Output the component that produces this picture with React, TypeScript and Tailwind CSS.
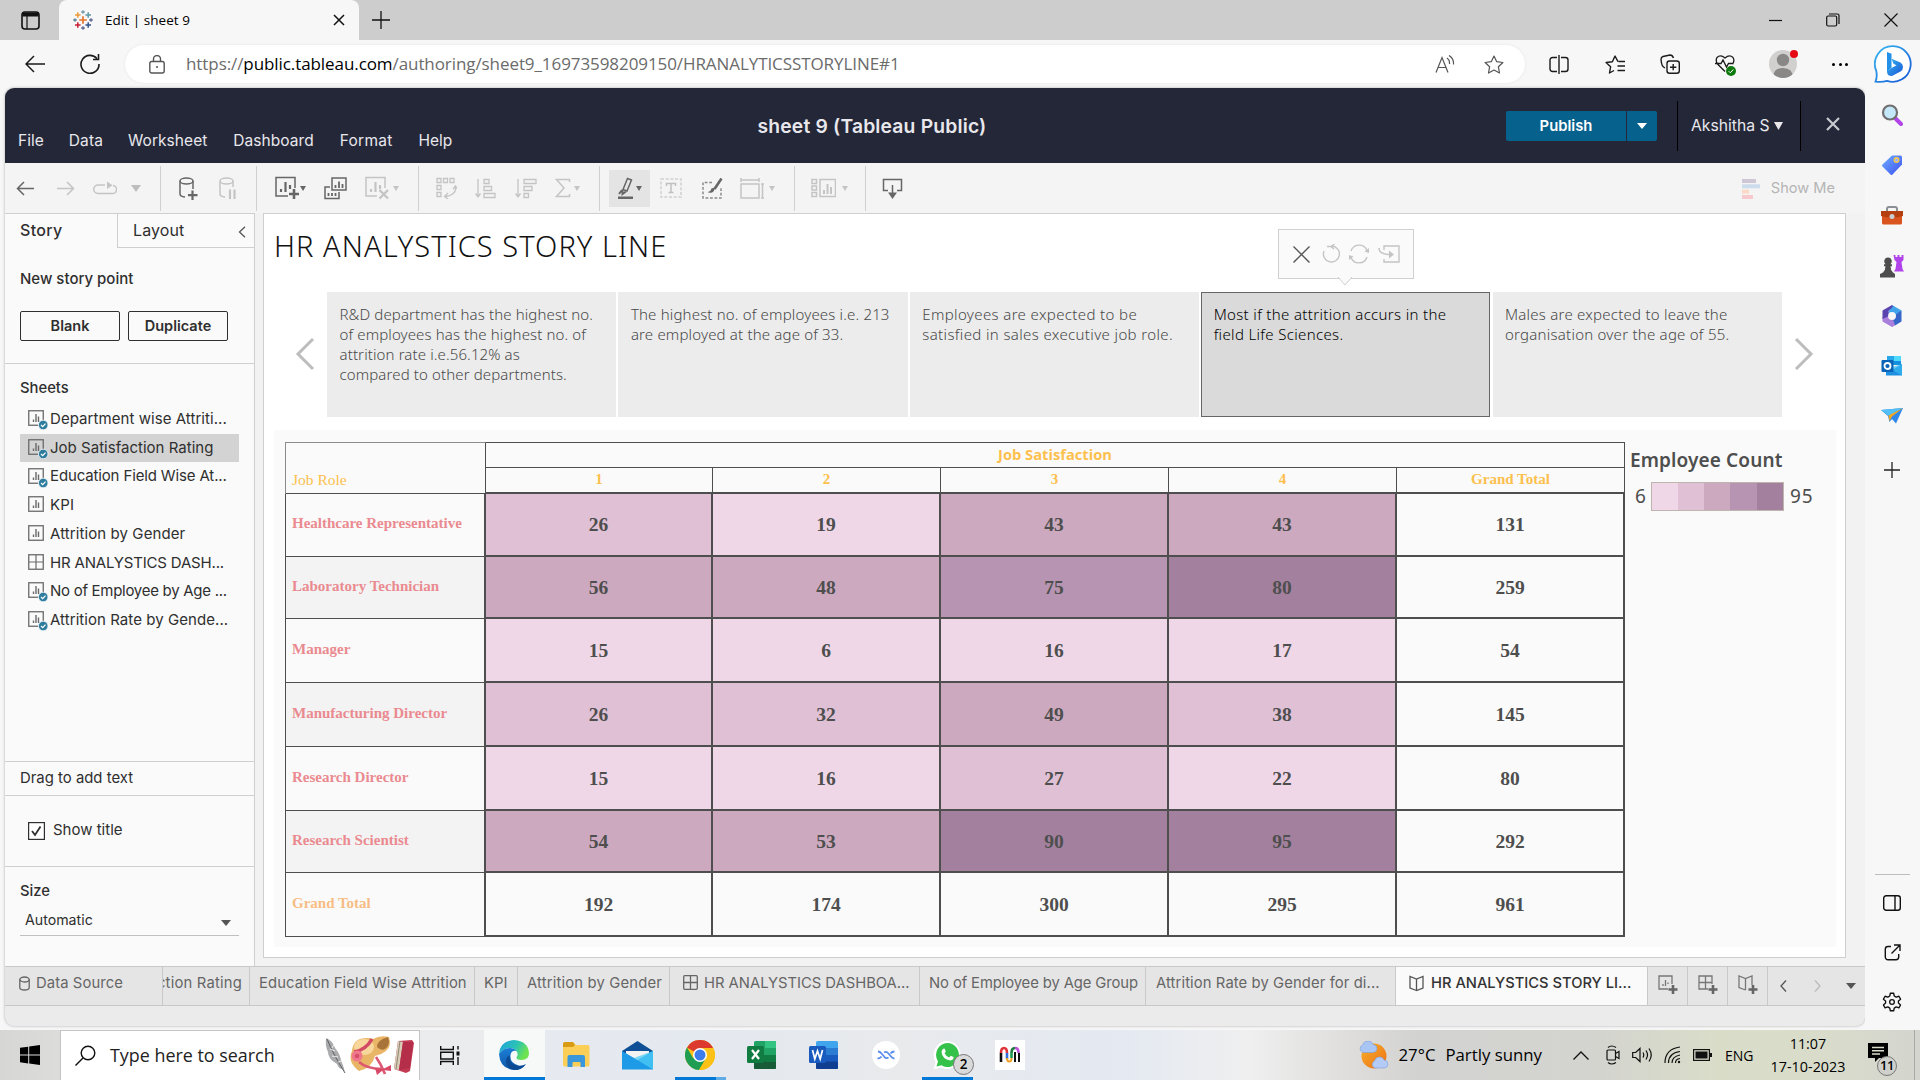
import React from 'react';

type SvgProps = { w: number; h: number; vb?: string; c?: string; s?: number; className?: string; children: React.ReactNode };

/* Stroked icon */
function Ic({ w, h, vb, c = '#666', s = 1.5, className = '', children }: SvgProps) {
  return (
    <svg width={w} height={h} viewBox={vb ?? `0 0 ${w} ${h}`} fill="none" stroke={c} strokeWidth={s} className={`shrink-0 ${className}`}>
      {children}
    </svg>
  );
}

function Caret({ c = '#666', w = 6, h = 5, className = '' }: { c?: string; w?: number; h?: number; className?: string }) {
  return (
    <svg width={w} height={h} viewBox="0 0 10 10" preserveAspectRatio="none" className={`shrink-0 ${className}`}>
      <path d="M0 0H10L5 10Z" fill={c} />
    </svg>
  );
}

/* ---------- Browser chrome ---------- */

function TableauMark() {
  const plus = (x: number, y: number, r: number, c: string, w: number) => (
    <path key={`${x}-${y}`} d={`M${x - r} ${y}H${x + r}M${x} ${y - r}V${y + r}`} stroke={c} strokeWidth={w} />
  );
  return (
    <svg width="20" height="20" viewBox="0 0 20 20" className="shrink-0">
      {plus(10, 10, 3.8, '#e8762d', 1.7)}
      {plus(4.8, 5, 2.8, '#eb9c3a', 1.5)}
      {plus(15.2, 5, 2.8, '#5c9aa8', 1.5)}
      {plus(4.8, 15, 2.8, '#c72037', 1.5)}
      {plus(15.2, 15, 2.8, '#35568f', 1.5)}
      {plus(10, 2, 1.8, '#7199a6', 1.3)}
      {plus(10, 18, 1.8, '#5b6591', 1.3)}
      {plus(2, 10, 1.8, '#5b879b', 1.3)}
      {plus(18, 10, 1.8, '#5b6591', 1.3)}
    </svg>
  );
}

function TabStrip() {
  return (
    <div className="flex h-10 items-stretch bg-[#cdcdcd]">
      <div className="flex w-[59px] items-center pl-[21px]">
        <Ic w={19} h={19} c="#111" s={1.6}>
          <rect x="1" y="1" width="17" height="17" rx="3" />
          <path d="M1.5 3.5h16" strokeWidth="4" />
          <path d="M6 5v13" strokeWidth="1.2" />
        </Ic>
      </div>
      <div className="flex w-[300px] items-center rounded-t-[8px] bg-[#f7f7f7] pl-[14px]">
        <TableauMark />
        <span className="ml-3 text-[13.500px] tracking-[0.050px] text-black">Edit | sheet 9</span>
        <Ic w={12} h={12} c="#111" s={1.5} className="ml-auto mr-[14px]">
          <path d="M1 1l10 10M11 1L1 11" />
        </Ic>
      </div>
      <div className="flex flex-1 items-center pl-[13px]">
        <Ic w={18} h={18} c="#111" s={1.3}>
          <path d="M9 0v18M0 9h18" />
        </Ic>
        <div className="ml-auto flex items-center pr-[22px]">
          <Ic w={14} h={14} c="#111" s={1.2} className="mr-[43px]">
            <path d="M0 7.500h13" />
          </Ic>
          <Ic w={14} h={14} c="#111" s={1.2} className="mr-[44px]">
            <rect x="0.7" y="3" width="10" height="10" rx="1.5" />
            <path d="M3 1h8.5Q13 1 13 2.5V11" />
          </Ic>
          <Ic w={14} h={14} c="#111" s={1.2}>
            <path d="M0.5 0.5l13 13M13.5 0.5l-13 13" />
          </Ic>
        </div>
      </div>
    </div>
  );
}

function AddressRow() {
  return (
    <div className="flex h-12 items-center">
      <Ic w={20} h={18} c="#1b1b1b" s={1.5} className="ml-[25px]">
        <path d="M20 9H1M9 1L1 9l8 8" />
      </Ic>
      <Ic w={20} h={20} c="#1b1b1b" s={1.6} className="ml-[35px]">
        <path d="M17 4.7A9 9 0 1 0 19 10" />
        <path d="M18.500 0v5.500h-5.500" />
      </Ic>
      <div className="ml-[25px] flex h-[38px] w-[1400px] items-center rounded-full bg-white shadow-[0_0_3px_rgba(0,0,0,0.08)]">
        <Ic w={16} h={19} c="#555" s={1.4} className="ml-[24px]">
          <rect x="0.8" y="6.500" width="14.400" height="11.500" rx="2" />
          <path d="M4.500 6.500V4a3.500 3.500 0 0 1 7 0v2.500" />
          <circle cx="8" cy="12" r="1" fill="#555" stroke="none" />
        </Ic>
        <span className="ml-[21px] whitespace-nowrap text-[17px] tracking-[-0.080px] text-[#6b6b6b]">
          https://<span className="text-black">public.tableau.com</span>/authoring/sheet9_16973598209150/HRANALYTICSSTORYLINE#1
        </span>
        <Ic w={20} h={18} c="#555" s={1.2} className="ml-auto mr-[29px]">
          <path d="M1 17.500L7 2.500l6 15M3 12.500h8M12 3q3 2 2.500 6M14 0.500q5 3 4.500 9" />
        </Ic>
        <Ic w={20} h={19} vb="0 0 20 19" c="#555" s={1.2} className="mr-[21px]">
          <path d="M10 1l2.700 5.700 6.200.8-4.500 4.300 1.100 6.200L10 15l-5.500 3 1.100-6.200L1.100 7.500l6.200-.8z" strokeLinejoin="round" />
        </Ic>
      </div>
      <Ic w={20} h={19} c="#1b1b1b" s={1.4} className="ml-[24px]">
        <path d="M8 2.500H3.500A2.500 2.500 0 0 0 1 5v9a2.500 2.500 0 0 0 2.500 2.500H8M12 2.500h4.500A2.500 2.500 0 0 1 19 5v9a2.500 2.500 0 0 1-2.500 2.500H12M10 0v19" />
      </Ic>
      <Ic w={21} h={19} c="#1b1b1b" s={1.4} className="ml-[36px]">
        <path d="M13 6.700L10 1 7.400 6.700l-6.300.8 4.500 4.300L4.500 18l4.500-2.500M13.500 6.500H20M12.500 11H20M12.500 15.500H20" strokeLinejoin="round" />
      </Ic>
      <Ic w={20} h={20} c="#1b1b1b" s={1.4} className="ml-[34px]">
        <rect x="7" y="7" width="12.300" height="12.300" rx="2.500" />
        <path d="M13.200 10v6.300M10 13.200h6.300M5 14L3.500 13Q2 12 1.500 9L1 5.500Q1 3 3 2.500L10 1q2.500 0 3.500 3" />
      </Ic>
      <div className="relative ml-[35px] h-5 w-5">
        <Ic w={20} h={20} c="#1b1b1b" s={1.3}>
          <path d="M10 17.500L3 10.500Q0 7 2 3.500 5.500 0 10 4q4.500-4 8-.5 2 3.500-.5 6.500M0 9.500h6l2-3.500 3.500 7 2-3.500h5" />
        </Ic>
        <svg width="10" height="10" viewBox="0 0 10 10" className="absolute -right-px bottom-[-2px]">
          <circle cx="5" cy="5" r="5" fill="#0f7b0f" />
          <path d="M2.700 5.200l1.600 1.600 3-3.300" stroke="#fff" fill="none" />
        </svg>
      </div>
      <div className="relative ml-[34px] h-7 w-7">
        <svg width="28" height="28" viewBox="0 0 28 28">
          <clipPath id="av"><circle cx="14" cy="14" r="14" /></clipPath>
          <circle cx="14" cy="14" r="14" fill="#d2d0ce" />
          <g clipPath="url(#av)" fill="#8a8886">
            <circle cx="14" cy="10" r="6.200" />
            <path d="M4 28q0-10 10-10t10 10z" />
          </g>
        </svg>
        <span className="absolute right-[-1px] top-0 h-[8px] w-[8px] rounded-full bg-[#e50914]" />
      </div>
      <div className="ml-[35px] flex gap-[3.500px]">
        <i className="h-[3px] w-[3px] rounded-full bg-black" />
        <i className="h-[3px] w-[3px] rounded-full bg-black" />
        <i className="h-[3px] w-[3px] rounded-full bg-black" />
      </div>
      <svg width="38" height="38" viewBox="0 0 38 38" className="ml-auto mr-2 shrink-0">
        <defs>
          <linearGradient id="bg1" x1="0" y1="0" x2="1" y2="1"><stop offset="0" stopColor="#35b8f0" /><stop offset="1" stopColor="#1a56d6" /></linearGradient>
        </defs>
        <path d="M19 1.200a17.800 17.800 0 1 1-6 34.600Q8 37.300 1.500 36.600 3.500 32 2.300 26A17.800 17.800 0 0 1 19 1.200z" fill="#fff" stroke="url(#bg1)" strokeWidth="1.800" />
        <path d="M13 7l4.500 1.800v14L13 27z" fill="#2491e8" />
        <path d="M13 26.500l4.500-3.500 5-2.800-3-1.400-2-5 9 3.700q2.500 1.500 2.500 4.500t-2.500 4.500L18 31q-5 0-5-4.500z" fill="url(#bg1)" />
      </svg>
    </div>
  );
}

/* ---------- Edge sidebar ---------- */

function EdgeSidebar() {
  return (
    <div className="flex w-[54px] flex-col items-center bg-[#f7f7f7]">
      <div className="mt-[2px] flex h-[50px] items-center">
        <svg width="22" height="22" viewBox="0 0 22 22">
          <path d="M14 14l6 6" stroke="#b144e8" strokeWidth="4" strokeLinecap="round" />
          <circle cx="9" cy="8.500" r="7" fill="#c4e7fa" stroke="#6f6f6f" strokeWidth="2.200" />
        </svg>
      </div>
      <div className="flex h-[50px] items-center">
        <svg width="22" height="22" viewBox="0 0 22 22">
          <defs><linearGradient id="tg" x1="0" y1="0" x2="1" y2="1"><stop stopColor="#6fb0ff" /><stop offset="1" stopColor="#3d4ff0" /></linearGradient></defs>
          <path d="M11 1.500h8.500q1.500 0 1.500 1.500v7.500L11.500 20.500q-1 1-2 0L1.500 12.500q-1-1 0-2z" fill="url(#tg)" />
          <circle cx="15.500" cy="6" r="2.300" fill="#9fb3ff" stroke="#f5c945" strokeWidth="1.400" />
        </svg>
      </div>
      <div className="flex h-[51px] items-center">
        <svg width="24" height="20" viewBox="0 0 24 20">
          <path d="M7 6V3q0-2 2-2h6q2 0 2 2v3" stroke="#8a8f95" strokeWidth="2" fill="none" />
          <path d="M2 6h20v11q0 1.500-1.500 1.500h-17Q2 18.500 2 17z" fill="#d9541e" />
          <path d="M1 5h22v5q-11 3-22 0z" fill="#b5400f" />
          <circle cx="12" cy="10.500" r="2.500" fill="#c9ced3" />
        </svg>
      </div>
      <div className="flex h-[50px] items-center">
        <svg width="24" height="24" viewBox="0 0 24 24">
          <path d="M13.500 1h2v2h2V1h2v2h2V1h2v5l-2 2 1 7 1.500 2.500h-10l1.500-2.500 1-7-2-2z" fill="#b044ea" />
          <path d="M8 3.500a3.800 3.800 0 0 1 2.500 6.700h1.500v2h-1.500q0 4 2.500 6.300l2 1.500v3.500H0V20l3-1.500Q5.500 16 5.500 12.200H4v-2h1.500A3.800 3.800 0 0 1 8 3.500z" fill="#4d4d4d" />
        </svg>
      </div>
      <div className="flex h-[50px] items-center">
        <svg width="22" height="22" viewBox="0 0 22 22">
          <path d="M11 0l9.500 5.500L17 12l-5-4.500L7 8z" fill="#3fa4ea" />
          <path d="M20.500 5.500v11L14 20.500 9 15l5-2 1.500-4z" fill="#3566c9" />
          <path d="M14 20.500L11 22 1.500 16.500V12L8 8l-.5 4.500 5 3z" fill="#a97fdc" />
          <path d="M1.500 14V5.500L11 0l1 1.500L7.500 6 8 11z" fill="#5a45b0" />
          <circle cx="11" cy="11" r="3.900" fill="#f7f7f7" />
        </svg>
      </div>
      <div className="flex h-[50px] items-center">
        <svg width="22" height="22" viewBox="0 0 22 22">
          <rect x="6" y="1" width="14" height="9" fill="#1490df" />
          <rect x="6" y="1" width="7" height="5" fill="#28a8ea" /><rect x="13" y="1" width="7" height="5" fill="#50d9ff" />
          <path d="M5 9l8 5 8-5v11.500H5z" fill="#1f8fe0" /><path d="M21 9v11.500L8 13z" fill="#35b8f1" opacity=".7" />
          <rect x="0.500" y="5" width="12" height="12" rx="1" fill="#0a64b8" />
          <circle cx="6.500" cy="11" r="3" stroke="#fff" strokeWidth="1.800" fill="none" />
        </svg>
      </div>
      <div className="flex h-[50px] items-center">
        <svg width="22" height="18" viewBox="0 0 22 18">
          <path d="M0 3L22 1 15 16.500 11 12 8.500 15 7 9z" fill="#2f87ea" />
          <path d="M0 3L22 1 8 9z" fill="#52c0f5" />
          <path d="M22 1L7.500 8.500 8.500 14 11 9.500z" fill="#f2a71b" />
        </svg>
      </div>
      <div className="mt-1 flex h-[50px] items-center">
        <Ic w={16} h={16} c="#222" s={1.3}><path d="M8 0v16M0 8h16" /></Ic>
      </div>
      <div className="mb-[3px] mt-auto h-px w-[35px] bg-[#bdbdbd]" />
      <div className="flex h-[50px] items-center">
        <Ic w={18} h={16} c="#111" s={1.4}><rect x="0.700" y="0.700" width="16.600" height="14.600" rx="2.500" /><path d="M12 1v14" /></Ic>
      </div>
      <div className="flex h-[48px] items-center">
        <Ic w={17} h={17} c="#111" s={1.4}><path d="M7 2.500H4A2.700 2.700 0 0 0 1.300 5.200V13A2.700 2.700 0 0 0 4 15.700h8a2.700 2.700 0 0 0 2.700-2.700v-3M10 1h6v6M16 1L7.500 9.500" /></Ic>
      </div>
      <div className="flex h-[52px] items-center">
        <Ic w={20} h={20} vb="0 0 24 24" c="#111" s={1.6}>
          <path d="M10 1.500h4l.7 3.300 2.300 1.400 3.300-1.100 2 3.500-2.600 2.200v2.500l2.600 2.200-2 3.500-3.300-1.100-2.300 1.400-.7 3.200h-4l-.7-3.200L7 17.900 3.700 19l-2-3.500 2.600-2.200v-2.500L1.700 8.600l2-3.500L7 6.200l2.300-1.400z" strokeLinejoin="round" />
          <circle cx="12" cy="12" r="2.800" />
        </Ic>
      </div>
      <div className="h-[2px]" />
    </div>
  );
}

/* ---------- Tableau header and toolbar ---------- */

function Header() {
  return (
    <div className="relative flex h-[75px] shrink-0 bg-[#242738] font-['Inter',sans-serif] text-[#e8e8ec]">
      <div className="flex items-end gap-[25px] pb-[11px] pl-[13px] text-[15.500px] leading-[23px]">
        <span>File</span><span className="tracking-[0.150px]">Data</span><span className="tracking-[0.050px]">Worksheet</span><span className="ml-px tracking-[0.050px]">Dashboard</span><span className="ml-px tracking-[0.250px]">Format</span><span className="ml-px">Help</span>
      </div>
      <div className="absolute inset-x-0 top-[25px] text-center text-[19.300px] font-semibold leading-[26px] tracking-[0.180px]">
        <span className="mr-[126px]">sheet 9 (Tableau Public)</span>
      </div>
      <div className="ml-auto mt-[13px] flex h-[50px] items-center">
        <div className="flex h-[30px] overflow-hidden rounded-[2px] bg-[#06618c]">
          <span className="flex w-[120px] items-center justify-center text-[14.800px] font-semibold text-white">Publish</span>
          <span className="flex w-[31px] items-center justify-center border-l border-[#242738]"><Caret c="#fff" w={10} h={6} /></span>
        </div>
        <div className="ml-[20px] flex h-full w-[124px] items-center border-x border-black pl-[13px] text-[15.700px]">
          <span>Akshitha S</span><Caret c="#e8e8ec" w={9} h={8} className="ml-[5px]" />
        </div>
        <Ic w={14} h={14} c="#c9cad0" s={2.200} className="mb-[4px] ml-[25px] mr-[25px]"><path d="M1 1l12 12M13 1L1 13" /></Ic>
      </div>
    </div>
  );
}

const G = '#c4c4c4';
const D = '#666';
function Sep({ className }: { className: string }) {
  return <div className={`mt-[3px] h-[45px] w-px shrink-0 self-start bg-[#d0d0d0] ${className}`} />;
}

function Toolbar() {
  return (
    <div className="flex h-[50px] shrink-0 items-center bg-[#f4f4f4] font-['Inter',sans-serif]">
      <Ic w={18} h={15} c={D} className="ml-[11px]"><path d="M18 7.500H2M8 1L1.500 7.500 8 14" /></Ic>
      <Ic w={18} h={15} c={G} className="ml-[23px]"><path d="M0 7.500h16M10 1l6.500 6.500L10 14" /></Ic>
      <Ic w={24} h={15} c={G} className="ml-[18px]"><path d="M12 4H5a4 4 0 0 0 0 8.500h14A4 4 0 0 0 20 4.500" /><path d="M14 .5V8l5.500-3.700z" fill={G} stroke="none" /></Ic>
      <Caret c="#bdbdbd" w={10} h={7} className="ml-[14px]" />
      <Sep className="ml-[19px]" />
      <Ic w={19} h={23} c={D} className="ml-[18px]">
        <ellipse cx="7.500" cy="4" rx="6.500" ry="3" /><path d="M1 4v13q0 2.500 5 3M14 4v8" /><path d="M13.500 13.500v9.500M9 18.200h9.500" strokeWidth="2.200" />
      </Ic>
      <Ic w={18} h={23} c={G} className="ml-[21px]">
        <ellipse cx="7.500" cy="4" rx="6.500" ry="3" /><path d="M1 4v13q0 2.500 5 3M14 4v6" /><path d="M11 12.500V22M15.500 12.500V22" strokeWidth="2.200" />
      </Ic>
      <Sep className="ml-[19px]" />
      <Ic w={25} h={24} c={D} className="ml-[18px]">
        <path d="M13 20H1V1.500h19V12" /><path d="M6 16v-3M10.500 16V6M15 13V9" strokeWidth="2.200" /><path d="M19 13v10M14 18h10" strokeWidth="2.600" />
      </Ic>
      <Caret c={D} />
      <Ic w={23} h={23} c={D} className="ml-[18px]">
        <path d="M8 10V1h14v12H8zM6 10H1v11.500h14V15" /><path d="M11.500 11V8M15 11V4.500M18.500 11V7M4.500 19v-3M8 19v-3M11.500 19v-3" strokeWidth="1.800" />
      </Ic>
      <Ic w={25} h={24} c={G} className="ml-[18px]">
        <path d="M12 20H1V1.500h19V12" /><path d="M6 16v-3M10.500 16V6M15 13V9" strokeWidth="2.200" /><path d="M14.500 14l8.500 8.500M23 14l-8.500 8.500" strokeWidth="2.400" />
      </Ic>
      <Caret c={G} className="ml-[3px]" />
      <Sep className="ml-[19px]" />
      <Ic w={21} h={22} c={G} className="ml-[17px]" s={1.300}>
        <path d="M1 1.500h4v4H1zM7.500 1.500h4v4h-4zM14 1.500h4v4h-4zM1 8.500h4v4H1zM1 15.500h4v4H1zM19.500 10q1 8-10 9.500M12 16l-3.500 3.500L12 22M17 12l2.500-3 2 3.500" />
      </Ic>
      <Ic w={21} h={21} c={G} className="ml-[18px]" s={1.300}>
        <path d="M3 1v17M.500 15.500L3 19l2.500-3.500M9 1.500h5v4H9zM9 8.500h7.500v4H9zM9 15.500h11v4H9z" />
      </Ic>
      <Ic w={22} h={21} c={G} className="ml-[19px]" s={1.300}>
        <path d="M3 1v17M.500 15.500L3 19l2.500-3.500M9 1.500h12v4H9zM9 8.500h8v4H9zM9 15.500h4.500v4H9z" />
      </Ic>
      <Ic w={16} h={20} c={G} className="ml-[18px]"><path d="M14.500 4V1.500H1.500L9 10l-7.500 8.500h13V16" /></Ic>
      <Caret c={G} className="ml-[3px]" />
      <Sep className="ml-[19px]" />
      <div className="ml-[9px] flex h-[37px] w-[41px] shrink-0 items-center justify-center gap-[2px] bg-[#e4e4e4]">
        <Ic w={16} h={22} c={D}><path d="M9.500 1.500l4 1.500-4.500 11-4-1.500z" /><path d="M4.500 13v4l3.500-2.500M1 17l3-4" strokeWidth="2" /><path d="M0 20.800h15" strokeWidth="2.600" /></Ic>
        <Caret c={D} />
      </div>
      <Ic w={22} h={20} c="#d0d0d0" className="ml-[10px]"><rect x="1" y="1" width="20" height="18" strokeDasharray="3 1.700" /><path d="M6.500 8V5.500h9V8M11 5.500v9M8.500 14.500h5" stroke="#c0c0c0" /></Ic>
      <Ic w={21} h={21} c={D} className="ml-[20px]"><path d="M10 4.500H1V20h18V10" strokeDasharray="2.800 1.700" stroke="#8a8a8a" /><path d="M19.500.5L12.500 11" strokeWidth="2.600" /><path d="M12 10.500q-1 4-4 3.500 2-1 2-3z" fill={D} /></Ic>
      <Ic w={24} h={21} c={G} className="ml-[17px]"><path d="M1 2h18M1 0v4M19 0v4M1 6h18v14H1zM22.500 6v14M21 6h3M21 20h3" /></Ic>
      <Caret c={G} className="ml-[5px]" />
      <Sep className="ml-[19px]" />
      <Ic w={25} h={20} c={G} className="ml-[16px]"><path d="M1 1.500h4.500v4H1zM1 8h4.500v4H1zM1 14.500h4.500v4H1zM9 1.500h15.500v17H9z" /><path d="M13 16v-4M16.500 16V6M20 16V9" strokeWidth="2" /></Ic>
      <Caret c={G} className="ml-[6px]" />
      <Sep className="ml-[17px]" />
      <Ic w={21} h={21} c={D} className="ml-[16px]"><path d="M6 12.500H1.500V1.500h18v11H15M10.500 7v9" /><path d="M6 14.500h9l-4.500 6.500z" fill={D} stroke="none" /></Ic>
      <div className="ml-auto mr-[30px] mt-[2px] flex items-center gap-[11px]">
        <svg width="18" height="20" viewBox="0 0 18 20">
          <rect width="14" height="4" fill="#cfc6d6" /><rect y="5.300" width="18" height="4" fill="#cddcec" /><rect y="10.600" width="7" height="4" fill="#fad9c5" /><rect y="16" width="11" height="4" fill="#f8c9cc" />
        </svg>
        <span className="text-[14.600px] text-[#b4b4b4]">Show Me</span>
      </div>
    </div>
  );
}

/* ---------- Left panel ---------- */

function SheetIcon({ dash = false, badge = false }: { dash?: boolean; badge?: boolean }) {
  return (
    <svg width="21" height="20" viewBox="0 0 21 20" className="shrink-0" fill="none">
      <rect x="0.750" y="0.750" width="14.500" height="14.500" stroke="#6a6a6a" strokeWidth="1.300" />
      {dash ? <path d="M8 1v14M1 8h14" stroke="#6a6a6a" strokeWidth="1.200" /> : <path d="M5.500 12V9.500M8 12V4M10.500 12V6.500" stroke="#6a6a6a" strokeWidth="1.400" />}
      {badge && (<><circle cx="15.200" cy="15" r="4.800" fill="#2e7d9f" stroke="#fafafa" strokeWidth="0.800" /><path d="M13 15l1.700 1.600 2.800-3" stroke="#fff" strokeWidth="1.200" /></>)}
    </svg>
  );
}

const sheets: { t: string; tr: string; badge?: boolean; on?: boolean; dash?: boolean }[] = [
  { t: 'Department wise Attriti...', tr: 'tracking-[0.060px]', badge: true },
  { t: 'Job Satisfaction Rating', tr: 'tracking-[0.020px]', badge: true, on: true },
  { t: 'Education Field Wise At...', tr: 'tracking-[-0.140px]', badge: true },
  { t: 'KPI', tr: 'tracking-[0.200px]' },
  { t: 'Attrition by Gender', tr: 'tracking-[0.090px]' },
  { t: 'HR ANALYSTICS DASH...', tr: 'tracking-[-0.180px]', dash: true },
  { t: 'No of Employee by Age ...', tr: 'tracking-[-0.280px]', badge: true },
  { t: 'Attrition Rate by Gende...', tr: 'tracking-[0.060px]', badge: true },
];

function LeftPanel() {
  return (
    <div className="flex w-[250px] shrink-0 flex-col border-r border-t border-[#cfcfcf] bg-[#fafafa] text-[15px] text-[#2f2f2f]">
      <div className="flex h-[34px] shrink-0">
        <div className="w-[112px] pl-[15px] pt-[4px] text-[16px] font-medium leading-[24px] tracking-[0.300px]">Story</div>
        <div className="flex flex-1 items-center border-b border-l border-[#cfcfcf] pl-[15px]">
          <span className="mb-[2px] text-[16px] tracking-[0.100px]">Layout</span>
          <Ic w={8} h={12} c="#555" s={1.300} className="ml-auto mr-[8px] mt-[2px]"><path d="M7 .7L1.500 6 7 11.300" /></Ic>
        </div>
      </div>
      <div className="h-[116px] shrink-0 border-b border-[#cfcfcf] pl-[15px] pt-[20px]">
        <div className="text-[15px] font-medium leading-[22px]">New story point</div>
        <div className="mt-[21px] flex gap-2 text-[14.500px] font-semibold">
          <div className="flex h-[30px] w-[100px] items-center justify-center rounded-[2px] border border-[#2f2f2f]">Blank</div>
          <div className="flex h-[30px] w-[100px] items-center justify-center rounded-[2px] border border-[#2f2f2f]">Duplicate</div>
        </div>
      </div>
      <div className="pl-[15px] pt-[13px] text-[14.800px] font-medium leading-[22px]">Sheets</div>
      <div className="mt-[6px] flex flex-1 flex-col pl-[15px]">
        {sheets.map((s) => (
          <div key={s.t} className={`flex h-[28.700px] w-[219px] items-center whitespace-nowrap pl-[8px] ${s.on ? 'bg-[#d3d3d3]' : ''}`}>
            <div className="pt-[2px]"><SheetIcon dash={s.dash} badge={s.badge} /></div>
            <span className={`ml-[1px] text-[15px] ${s.tr}`}>{s.t}</span>
          </div>
        ))}
      </div>
      <div className="h-[34px] shrink-0 border-t border-[#cfcfcf] pl-[15px] leading-[32px]"><span className="text-[14.900px]">Drag to add text</span></div>
      <div className="flex h-[72px] shrink-0 items-center border-y border-[#cfcfcf] pl-[23px]">
        <Ic w={17} h={18} c="#2f2f2f" s={1.200}><rect x="0.600" y="0.600" width="15.800" height="16.800" fill="#fff" /><path d="M4 9l3 4 5.500-8.500" strokeWidth="1.800" /></Ic>
        <span className="mb-px ml-2">Show title</span>
      </div>
      <div className="h-[99px] shrink-0 pl-[15px] pt-[13px]">
        <div className="text-[14.800px] font-medium leading-[22px]">Size</div>
        <div className="flex h-[34px] w-[219px] items-center border-b border-[#c0c0c0] pl-[5px] pt-[3px]">
          <span className="text-[14.200px]">Automatic</span>
          <Caret c="#555" w={10} h={6} className="ml-auto mr-[8px] mt-1.5" />
        </div>
      </div>
    </div>
  );
}

/* ---------- Story canvas ---------- */

const points: { lines: string[]; tr: string }[] = [
  { lines: ['R&D department has the highest no.', 'of employees has the highest no. of', 'attrition rate i.e.56.12% as', 'compared to other departments.'], tr: 'tracking-[0.120px]' },
  { lines: ['The highest no. of employees i.e. 213', 'are employed at the age of 33.'], tr: 'tracking-[0.170px]' },
  { lines: ['Employees are expected to be', 'satisfied in sales executive job role.'], tr: 'tracking-[0.370px]' },
  { lines: ['Most if the attrition accurs in the', 'field Life Sciences.'], tr: 'tracking-[0.340px]' },
  { lines: ['Males are expected to leave the', 'organisation over the age of 55.'], tr: 'tracking-[0.240px]' },
];

const L1 = 'bg-[#efd7e8]', L2 = 'bg-[#dfc0d5]', L3 = 'bg-[#cca9bf]', L4 = 'bg-[#b795b2]', L5 = 'bg-[#a3819e]', N = '';
const rows: { label: string; h: string; v: [number, string][]; alt?: boolean; total?: boolean }[] = [
  { label: 'Healthcare Representative', h: 'h-[63px]', v: [[26, L2], [19, L1], [43, L3], [43, L3], [131, N]] },
  { label: 'Laboratory Technician', h: 'h-[62px]', alt: true, v: [[56, L3], [48, L3], [75, L4], [80, L5], [259, N]] },
  { label: 'Manager', h: 'h-[64px]', v: [[15, L1], [6, L1], [16, L1], [17, L1], [54, N]] },
  { label: 'Manufacturing Director', h: 'h-[64px]', alt: true, v: [[26, L2], [32, L2], [49, L3], [38, L2], [145, N]] },
  { label: 'Research Director', h: 'h-[64px]', v: [[15, L1], [16, L1], [27, L2], [22, L1], [80, N]] },
  { label: 'Research Scientist', h: 'h-[62px]', alt: true, v: [[54, L3], [53, L3], [90, L5], [95, L5], [292, N]] },
  { label: 'Grand Total', h: 'h-[64px]', total: true, v: [[192, N], [174, N], [300, N], [295, N], [961, N]] },
];
const colW = ['w-[227px]', 'w-[228px]', 'w-[228px]', 'w-[228px]', 'w-[228px]'];

function Crosstab() {
  return (
    <div className="w-[1340px] font-['Liberation_Serif',serif] text-[15px] font-bold">
      <div className="flex h-[52px]">
        <div className="flex w-[201px] items-end border border-b-0 border-[#8c8c8c] border-r-[#4e4e4e] pb-[4px] pl-[6px] text-[15.500px] font-normal leading-[18px] text-[#fdc04d] shadow-[inset_0_-1px_0_#4e4e4e]">
          <span className="mb-px">Job Role</span>
        </div>
        <div className="flex flex-1 flex-col text-[#fdc04d]">
          <div className="flex h-[26px] items-center justify-center border-y border-r border-[#4e4e4e] pb-[2px] font-['Open_Sans',sans-serif] text-[14.700px]">Job Satisfaction</div>
          <div className="flex flex-1 border-b-2 border-[#4e4e4e]">
            {['1', '2', '3', '4', 'Grand Total'].map((h, i) => (
              <div key={h} className={`flex items-center justify-center border-r border-[#4e4e4e] pb-px ${colW[i]}`}>{h}</div>
            ))}
          </div>
        </div>
      </div>
      {rows.map((r, k) => (
        <div key={r.label} className={`flex ${r.h}`}>
          <div className={`flex w-[201px] items-center border-b border-l border-r-2 border-[#4e4e4e] pb-[3px] pl-[6px] ${r.alt ? 'bg-[#f3f3f3]' : ''} ${r.total ? 'text-[#f7bd84]' : 'text-[#ea8a90]'}`}>{r.label}</div>
          {r.v.map(([n, bg], i) => (
            <div key={i} className={`flex items-center justify-center border-b-2 border-r-2 border-[#4e4e4e] text-[19.500px] text-[#4e4e4e] ${k ? 'pt-[2px]' : ''} ${colW[i]} ${bg}`}>{n}</div>
          ))}
        </div>
      ))}
    </div>
  );
}

function StoryPopup() {
  return (
    <div className="absolute left-[1014px] top-[15px] flex h-[50px] w-[136px] items-center border border-[#d0d0d0] bg-[#fafafa] pl-[14px]">
      <Ic w={17} h={17} c="#555" s={1.400}><path d="M.5.5l16 16M16.500.5l-16 16" /></Ic>
      <Ic w={18} h={20} c={G} s={1.400} className="ml-[12px]"><path d="M2 7a8 8 0 1 0 8-5M5 2.500h6M12.500 0L9 2.500 12 5" /></Ic>
      <Ic w={20} h={20} c={G} s={1.400} className="ml-[9px]"><path d="M2 7a8.500 8.500 0 0 1 16-.5M18 13a8.500 8.500 0 0 1-16 .5" /><path d="M20 4v5l-4.500-1.500zM0 16v-5l4.500 1.500z" fill={G} stroke="none" /></Ic>
      <Ic w={22} h={18} c={G} s={1.400} className="ml-[9px]"><path d="M6 5V1h15v16H6v-3M1 3q0 6.500 11 6.500" /><path d="M11 5.500l5 4-5 4z" fill={G} stroke="none" /></Ic>
      <svg width="14" height="9" viewBox="0 0 14 9" className="absolute left-[59px] top-[47px]">
        <path d="M0 0L7 8 14 0" fill="#fafafa" stroke="#d0d0d0" />
      </svg>
    </div>
  );
}

function Story() {
  return (
    <div className="relative ml-[8px] flex h-[745px] w-[1583px] flex-col border border-[#cfcfcf] bg-white pl-[10px] font-['Noto_Sans',sans-serif]">
      <div className="h-[78px] pt-[12px] text-[29px] font-light leading-[40px] tracking-[1.050px] text-[#111]">HR ANALYSTICS STORY LINE</div>
      <StoryPopup />
      <div className="flex h-[125px] items-center">
        <Ic w={20} h={34} c="#bdbdbd" s={3} className="mb-[2px] ml-[21px] mr-[12px]"><path d="M18 2L3 17l15 15" /></Ic>
        <div className="flex h-full gap-[2.200px]">
          {points.map((p, i) => (
            <div key={i} className={`w-[289.200px] whitespace-nowrap text-[15px] font-light leading-[20px] ${i === 3 ? 'border border-[#666] bg-[#dadada] pl-[11.500px] pt-[11px] text-black' : 'bg-[#ececec] pl-[12.500px] pt-[12px] text-[#484848]'} ${p.tr}`}>
              {p.lines.map((l) => <div key={l}>{l}</div>)}
            </div>
          ))}
        </div>
        <Ic w={20} h={34} c="#bdbdbd" s={3} className="mb-[2px] ml-[12px]"><path d="M2 2l15 15L2 32" /></Ic>
      </div>
      <div className="mt-[13px] flex h-[517px] w-[1562px] bg-[#fafafa] pl-[11px] pt-[12px]">
        <Crosstab />
        <div className="ml-[5px] pt-[2px] text-[19px] text-[#4e4e4e]">
          <div className="whitespace-nowrap font-semibold leading-[32px] tracking-[0.120px]">Employee Count</div>
          <div className="ml-[5px] mt-[5px] flex items-center gap-[5px] leading-[30px]">
            <span>6</span>
            <div className="flex h-[29px] w-[133px] border border-[#bdb5ae]">
              {[L1, L2, L3, L4, L5].map((b) => <i key={b} className={`flex-1 ${b}`} />)}
            </div>
            <span className="ml-px tracking-[1px]">95</span>
          </div>
        </div>
      </div>
    </div>
  );
}

/* ---------- Sheet tabs ---------- */

function BookIcon({ c = '#555', plus = false }: { c?: string; plus?: boolean }) {
  return (
    <Ic w={plus ? 21 : 15} h={plus ? 20 : 17} c={c} s={1.300}>
      <path d={plus ? 'M7.500 15L1 12.500V1l6.500 2.500L14 1v9M7.500 3.500V15' : 'M7.500 15.500L1 13V1.500l6.500 2.500L14 1.500V13zM7.500 4v11.500'} />
      {plus && <path d="M15 10v9M10.500 14.500h9" stroke={D} strokeWidth="2.600" />}
    </Ic>
  );
}

function SheetTabs() {
  const tab = 'flex shrink-0 items-start whitespace-nowrap border-r border-[#c9c9c9] pt-[4px] leading-[24px]';
  return (
    <div className="flex h-[40px] shrink-0 border-y border-[#c9c9c9] bg-[#e5e5e5] text-[14.800px] text-[#666]">
      <div className={`${tab} w-[158px] pl-[14px]`}>
        <Ic w={11} h={15} c="#666" s={1.300} className="mr-[6px] mt-[5px]"><ellipse cx="5.500" cy="3.500" rx="4.700" ry="2.500" /><path d="M.8 3.500v8q0 2.500 4.700 2.500t4.700-2.500v-8" /></Ic>
        <span className="tracking-[0.100px]">Data Source</span>
      </div>
      <div className={`${tab} w-[87px] justify-end overflow-hidden pr-[7px] tracking-[0.200px]`}>ction Rating</div>
      <div className={`${tab} w-[225px] pl-[9px] tracking-[0.090px]`}>Education Field Wise Attrition</div>
      <div className={`${tab} w-[43px] pl-[9px]`}>KPI</div>
      <div className={`${tab} w-[152px] pl-[9px] tracking-[0.170px]`}>Attrition by Gender</div>
      <div className={`${tab} w-[250px] pl-[13px] tracking-[-0.020px]`}>
        <Ic w={15} h={15} c="#666" s={1.300} className="mr-[6px] mt-[4px]"><rect x=".7" y=".7" width="13.600" height="13.600" rx="1" /><path d="M7.500 1v13M1 7.500h13" /></Ic>
        HR ANALYSTICS DASHBOA...
      </div>
      <div className={`${tab} w-[226px] pl-[9px] tracking-[-0.100px]`}>No of Employee by Age Group</div>
      <div className={`${tab} w-[250px] pl-[10px] tracking-[0.100px]`}>Attrition Rate by Gender for di...</div>
      <div className={`${tab} w-[252px] bg-[#fafafa] pl-[13px] font-medium text-[#333]`}>
        <div className="mr-[7px] mt-[4px]"><BookIcon /></div>
        <span className="text-[14.700px] tracking-[0.010px]">HR ANALYSTICS STORY LI...</span>
      </div>
      <div className={`${tab} w-[40px] justify-center pl-[2px]`}>
        <Ic w={21} h={20} c="#777" s={1.300} className="mt-[4px]"><path d="M10 14H1V1h13v8M5 11V9M7.500 11V5M10 9V7.500" /><path d="M15 10v9M10.500 14.500h9" stroke={D} strokeWidth="2.600" /></Ic>
      </div>
      <div className={`${tab} w-[40px] justify-center pl-[2px]`}>
        <Ic w={21} h={20} c="#777" s={1.300} className="mt-[4px]"><path d="M10 14H1V1h13v8M7.500 1v13M1 7.500h13" /><path d="M15 10v9M10.500 14.500h9" stroke={D} strokeWidth="2.600" /></Ic>
      </div>
      <div className={`${tab} w-[40px] justify-center pl-[2px]`}>
        <div className="mt-[4px]"><BookIcon plus c="#777" /></div>
      </div>
      <Ic w={7} h={12} c="#555" s={1.300} className="ml-[12px] mt-[13px]"><path d="M6 .5L1 6l5 5.500" /></Ic>
      <Ic w={7} h={12} c="#bbb" s={1.300} className="ml-[27px] mt-[13px]"><path d="M1 .5L6 6l-5 5.500" /></Ic>
      <Caret c="#555" w={10} h={6} className="ml-[25px] mt-[16px]" />
    </div>
  );
}

/* ---------- Windows taskbar ---------- */

function Taskbar() {
  return (
    <div className="flex h-[50px] items-stretch bg-[linear-gradient(90deg,#d6d6d5_0px,#dcdcdb_60px,#ebeced_440px,#e6eaf0_560px,#e4e8ef_700px,#e8eaec_900px,#e4e9f2_1120px,#efefef_1250px,#e0dfde_1340px,#d2d2d1_1420px,#d4d4cf_1600px,#d9ddc8_1720px,#d9dcca_1820px,#d4d5cf_1920px)] text-black">
      <div className="flex w-[60px] items-center justify-center">
        <svg width="20" height="20" viewBox="0 0 20 20"><path d="M0 2.800L8.200 1.700v7.900H0zM9.200 1.500L20 0v9.600H9.200zM0 10.500h8.200v7.900L0 17.300zM9.200 10.500H20V20L9.200 18.500z" /></svg>
      </div>
      <div className="flex w-[360px] items-center border border-b-0 border-[#c4c4c4] bg-white pl-[14px]">
        <Ic w={21} h={21} c="#111" s={1.400}><circle cx="13" cy="8" r="6.800" /><path d="M8 13L.5 20.500" /></Ic>
        <span className="ml-[14px] text-[17.900px] text-[#222]">Type here to search</span>
        <svg width="92" height="42" viewBox="0 0 92 42" className="ml-auto mr-[4px]">
          <path d="M3 3q7 3 9 10 5 6 6 12 2 5 4 12l-3-3q-3 0-5-5Q5 24 5 17 2 11 3 3z" fill="#a9abad" /><path d="M4 4q6 15 18 34" stroke="#5f6163" fill="none" />
          <path d="M7 14l5 2M9 21l6 1M12 8l-3 5M15 27l4-1" stroke="#fff" strokeWidth=".8" />
          <path d="M29 16Q30 3 44 3q4 0 6 1Q57 0 66 2q3 9-3 14-5 4-11 5-3 12-16 15Q24 27 29 16z" fill="#e9b566" />
          <path d="M54 12q0-7 11-10 3 8-3 12-4 2-8-2z" fill="#a9743a" /><ellipse cx="41" cy="12" rx="10" ry="8" fill="#f7d79c" />
          <path d="M31 17q12-2 18-13" stroke="#d34a64" strokeWidth="3.500" fill="none" />
          <circle cx="34" cy="21" r="5.500" fill="#f0788c" /><circle cx="34" cy="21" r="2.300" fill="#d84f69" />
          <path d="M36 27q8 7 23 7M53 22q5 7 9 17" stroke="#dd5873" strokeWidth="2.600" fill="none" />
          <path d="M52 33l8 1 8-4v6l-8-1-6 5z" fill="#d84a68" />
          <path d="M75 6l14-1 2 3-4 28-4 2-12-4z" fill="#c33a53" /><path d="M75 6l5 1-4 28-5-1z" fill="#d9cdb8" /><path d="M77 6l-4 28" stroke="#8f8573" fill="none" /><path d="M80 7l10 0-3 26-11 2z" fill="#b52e49" />
        </svg>
      </div>
      <div className="flex w-[64px] items-center pl-[20px]">
        <Ic w={20} h={19} c="#111" s={1.400}><path d="M.7 0v3.500h12.600V0M.7 19v-3.500h12.600V19M.7 6.200h12.600v6.800H.7zM18 0v3.500M18 11v8" /><path d="M18 5.500v4" strokeWidth="3" /></Ic>
      </div>
      <div className="flex w-[61px] items-center justify-center border-b-[3px] border-[#0078d7] bg-[#f7f9f9] pr-[2px] pt-[3px]">
        <svg width="30" height="30" viewBox="0 0 30 30">
          <defs>
            <linearGradient id="e1" x1="0" y1="0" x2="1" y2=".4"><stop stopColor="#1f9fe0" /><stop offset=".6" stopColor="#2bc3b4" /><stop offset="1" stopColor="#6fe34f" /></linearGradient>
            <linearGradient id="e2" x1="0" y1="0" x2="0" y2="1"><stop stopColor="#1b7fd6" /><stop offset="1" stopColor="#1057a8" /></linearGradient>
          </defs>
          <path d="M0 14Q1 1 15 0q14 1 15 13 0 7-7.500 7-5.500 0-5-3 2-2 .5-5-2-4-7-4Q4 8 0 14z" fill="url(#e1)" />
          <path d="M0 14Q4 8 10.500 8q5 0 7 3-5-1-6 4-1 8 8 10.500 4 1 7-1Q22 30 15 30 1 29 0 14z" fill="url(#e2)" />
          <path d="M11 15q-2 9 8 11 4 .5 8-2-4 6-11 6-9-1-9-9 0-4 4-6z" fill="#0c4a94" />
        </svg>
      </div>
      <div className="flex w-[61px] items-center justify-center">
        <svg width="28" height="26" viewBox="0 0 28 26">
          <path d="M1 2q0-2 2-2h8l3 3h12q1.500 0 1.500 1.500V23q0 1.500-1.500 1.500H2.500Q1 24.500 1 23z" fill="#fbcf57" /><path d="M1 2q0-2 2-2h8l2 3-2 2H1z" fill="#d99b14" />
          <path d="M5.500 25V15q0-2 2-2H21q2 0 2 2v10h-4.500v-4q0-1-1-1h-6q-1 0-1 1v4z" fill="#3b97dc" />
        </svg>
      </div>
      <div className="flex w-[63px] items-center justify-center">
        <svg width="31" height="29" viewBox="0 0 31 29">
          <path d="M0 10L15.500 0 31 10v18H0z" fill="#0f4f96" /><path d="M4 10h23v10H4z" fill="#f3f3f3" />
          <path d="M0 10l15.500 9L31 10v18.500H0z" fill="#1e9be6" /><path d="M31 10v18.500L12 17z" fill="#4fcbf5" opacity=".75" />
        </svg>
      </div>
      <div className="flex w-[62px] flex-col items-center justify-end">
        <svg width="30" height="30" viewBox="0 0 30 30" className="mb-[7px]">
          <circle cx="15" cy="15" r="15" fill="#fbc116" />
          <path d="M15 15L2 7.500A15 15 0 0 1 28 7.500z" fill="#db3a2d" /><path d="M2 7.500a15 15 0 0 0 12 22.500L21 18.500 8 18z" fill="#1f9d52" />
          <path d="M15 8h13.200A15 15 0 0 1 14 30l7-11.500z" fill="#fbc116" />
          <circle cx="15" cy="15" r="7" fill="#fff" /><circle cx="15" cy="15" r="5.500" fill="#3b7ded" />
        </svg>
        <div className="flex h-[3px] w-[51px]"><i className="w-[41px] bg-[#0078d7]" /><i className="flex-1 bg-[#5fabe5]" /></div>
      </div>
      <div className="flex w-[61px] items-center justify-center">
        <svg width="30" height="28" viewBox="0 0 30 28">
          <rect x="7" width="22" height="28" rx="1.500" fill="#21a366" /><rect x="18" width="11" height="7" fill="#33c481" /><rect x="7" y="14" width="11" height="7" fill="#107c41" /><rect x="7" y="20" width="22" height="8" rx="1" fill="#185c37" /><rect x="18" y="7" width="11" height="7" fill="#21a366" /><rect x="18" y="14" width="11" height="7" fill="#107c41" />
          <rect y="5" width="17" height="17" rx="1.500" fill="#107c41" /><path d="M5 9l7 9M12 9l-7 9" stroke="#fff" strokeWidth="2.200" />
        </svg>
      </div>
      <div className="flex w-[62px] items-center justify-center pl-[2px]">
        <svg width="30" height="28" viewBox="0 0 30 28">
          <rect x="7" width="22" height="28" rx="1.500" fill="#41a5ee" /><rect x="7" y="7" width="22" height="7" fill="#2b7cd3" /><rect x="7" y="14" width="22" height="7" fill="#185abd" /><rect x="7" y="20.500" width="22" height="7.500" rx="1" fill="#103f91" />
          <rect y="5" width="17" height="17" rx="1.500" fill="#185abd" /><path d="M3.500 9l2.300 9L8.500 10l2.700 8 2.300-9" stroke="#fff" strokeWidth="1.700" fill="none" />
        </svg>
      </div>
      <div className="flex w-[62px] items-center justify-center pl-[2px]">
        <svg width="28" height="28" viewBox="0 0 28 28"><circle cx="14" cy="14" r="14" fill="#fff" /><path d="M6 10.500q2 0 3.500 2l3 3.500q1.500 2 4 .5M22.500 17.500q-2 0-3.500-2l-3-3.500q-1.500-2-4-.5M5.500 17.500q2.500 0 4-2M22.500 10.500q-2.500 0-4 2" stroke="#5b8def" strokeWidth="1.800" fill="none" /></svg>
      </div>
      <div className="relative flex w-[62px] flex-col items-center justify-end">
        <svg width="28" height="29" viewBox="0 0 28 29" className="mb-[7px]">
          <path d="M14.500 0A13.500 14 0 1 1 8 26.500L.5 28.500 2.500 21A13.500 14 0 0 1 14.500 0z" fill="#fff" />
          <path d="M14.500 2A11.500 12 0 1 1 8.500 24.300L3.500 25.500 5 20.500A11.500 12 0 0 1 14.500 2z" fill="#35c24a" />
          <path d="M10 8q1.500-1 2 .5l.8 2-1.200 1.800q1.500 3 4.500 4.200l1.600-1.800 2.800 1.400q.5 3-3 3.400Q9 18 8.500 11 8.700 9 10 8z" fill="#fff" />
        </svg>
        <span className="absolute left-[37px] top-[24px] flex h-[21px] w-[21px] items-center justify-center rounded-full border border-[#777] bg-[#d9d9d9] text-[13.500px] font-semibold">2</span>
        <div className="h-[3px] w-[51px] bg-[#0078d7]" />
      </div>
      <div className="flex w-[62px] items-center justify-center pl-[2px]">
        <svg width="30" height="30" viewBox="0 0 30 30" fill="none" strokeWidth="2.600"><rect width="30" height="30" fill="#fff" />
          <path d="M6 22V13" stroke="#111" /><path d="M6 13q0-5 3-5t3 5" stroke="#e0343c" /><path d="M12 13v6" stroke="#2f6fe0" /><path d="M12 18q0 3.500 2.300 3.500T16.500 18" stroke="#f0a020" strokeWidth="2" /><path d="M16.500 18v-5" stroke="#1f9d52" /><path d="M16.500 13q0-5 3.500-5" stroke="#1f7d42" /><path d="M20 8q3.500 0 3.500 5" stroke="#c052dd" /><path d="M20 12v10M24 13v9" stroke="#111" strokeWidth="2" />
        </svg>
      </div>
      <div className="ml-auto flex items-center">
        <svg width="30" height="29" viewBox="0 0 30 29">
          <defs><linearGradient id="sn" x1="0" y1="0" x2="1" y2="1"><stop stopColor="#f6b02c" /><stop offset="1" stopColor="#ee6f14" /></linearGradient></defs>
          <circle cx="15" cy="15" r="12.500" fill="url(#sn)" />
          <path d="M4 11.500a4 4 0 0 1-.5-7.500Q5 0 9 0q4 0 5 3.500 4 .5 4 4t-4 4z" fill="#a9c5f3" stroke="#7b9fdc" strokeWidth=".6" />
          <path d="M16 27a3.700 3.700 0 0 1-.5-7q1-4 5-4 3.500 0 4.500 3 4 .5 4 4t-3.500 4z" fill="#b4cbf5" stroke="#7b9fdc" strokeWidth=".6" />
        </svg>
        <span className="ml-[10px] text-[16.800px]">27°C</span>
        <span className="ml-[10px] text-[16.800px]">Partly sunny</span>
        <Ic w={16} h={9} c="#111" s={1.300} className="ml-[31px]"><path d="M.5 8.500L8 1l7.500 7.500" /></Ic>
        <Ic w={14} h={20} c="#111" s={1.200} className="ml-[17px]"><rect x="1" y="5" width="8.500" height="10" rx="1" /><path d="M9.500 8.500L13 6.500v7l-3.500-2M2 2.500Q5.500-.5 10 2.500M2 17.500Q5.500 20.500 10 17.500" /></Ic>
        <Ic w={21} h={16} c="#111" s={1.200} className="ml-[12px]"><path d="M.7 5.500h3L8 1.500v13l-4.300-4h-3zM11 5.500q1.500 2.500 0 5M14 3.500q3 4.500 0 9M17 1.500q4.500 6.500 0 13" /></Ic>
        <Ic w={17} h={18} c="#111" s={1.200} className="ml-[11px]"><path d="M1 17Q1 3 16 1M4.500 17q0-10 11.500-11.500M8 17q0-6.500 8-8M11.500 17q0-4 4.500-4.500" /><circle cx="15" cy="16" r="1.200" fill="#111" stroke="none" /></Ic>
        <Ic w={19} h={12} c="#111" s={1.200} className="ml-[12px]"><rect x=".6" y=".6" width="15.800" height="10.800" /><rect x="2.500" y="2.500" width="12" height="7" fill="#111" stroke="none" /><path d="M18 4v4" strokeWidth="2" /></Ic>
        <span className="ml-[13px] w-[29px] text-[14px]">ENG</span>
        <div className="ml-[14px] w-[80px] text-center text-[14.300px] leading-[23.500px]">
          <div>11:07</div><div className="tracking-[0.050px]">17-10-2023</div>
        </div>
        <div className="relative ml-[20px] h-[34px] w-[34px]">
          <svg width="20" height="20" viewBox="0 0 20 20" className="mt-[5px]"><path d="M0 0h20v15h-9l-4 4v-4H0z" /><path d="M4 4.500h12M4 7.800h12M4 11h8" stroke="#d9dcca" strokeWidth="1.400" /></svg>
          <span className="absolute left-[9px] top-[18px] flex h-[20px] w-[20px] items-center justify-center rounded-full border border-[#777] bg-[#cfd0cb] text-[13px] font-semibold tracking-[-0.500px]">11</span>
        </div>
        <div className="ml-[12px] h-[50px] w-px bg-[#a9aaa3]" />
        <div className="w-[5px]" />
      </div>
    </div>
  );
}

export default function App() {
  return (
    <div className="flex h-[1080px] w-[1920px] flex-col overflow-hidden bg-[#f7f7f7] font-['Open_Sans','Noto_Sans',sans-serif]">
      <TabStrip />
      <AddressRow />
      <div className="flex h-[942px] shrink-0">
        <div className="ml-[5px] flex h-[938px] w-[1860px] flex-col overflow-hidden rounded-[9px] bg-[#ebebeb] font-['Inter',sans-serif] shadow-[0_0_3px_rgba(0,0,0,0.3)]">
          <Header />
          <Toolbar />
          <div className="flex h-[753px] shrink-0 bg-[#f2f2f2]">
            <LeftPanel />
            <Story />
          </div>
          <SheetTabs />
        </div>
        <EdgeSidebar />
      </div>
      <Taskbar />
    </div>
  );
}
